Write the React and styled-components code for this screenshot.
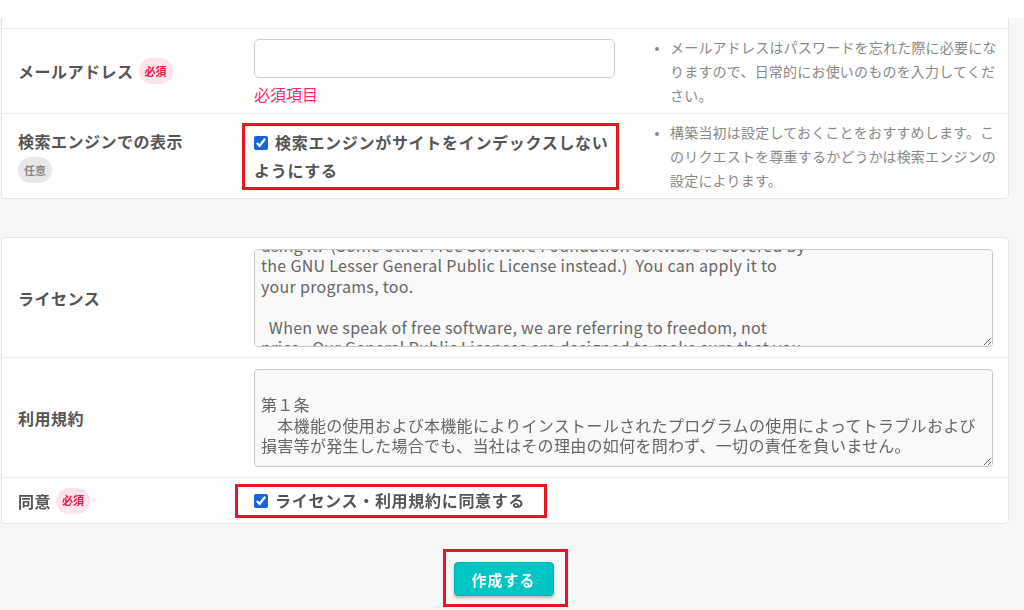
import React, { useEffect, useRef } from "react";
import styled, { createGlobalStyle } from "styled-components";

const GlobalStyle = createGlobalStyle`
  html, body {
    margin: 0;
    padding: 0;
    background: #f7f7f7;
  }
  body {
    font-family: "Noto Sans CJK JP", "Noto Sans", sans-serif;
    color: #555;
  }
`;

const LICENSE = `                    GNU GENERAL PUBLIC LICENSE
                       Version 2, June 1991

 Copyright (C) 1989, 1991 Free Software Foundation, Inc.,
 51 Franklin Street, Fifth Floor, Boston, MA 02110-1301 USA
 Everyone is permitted to copy and distribute verbatim copies
 of this license document, but changing it is not allowed.

                            Preamble

  The licenses for most software are designed to take away your
freedom to share and change it.  By contrast, the GNU General Public
License is intended to guarantee your freedom to share and change free
software--to make sure the software is free for all its users.  This
General Public License applies to most of the Free Software
Foundation's software and to any other program whose authors commit to
using it.  (Some other Free Software Foundation software is covered by
the GNU Lesser General Public License instead.)  You can apply it to
your programs, too.

  When we speak of free software, we are referring to freedom, not
price.  Our General Public Licenses are designed to make sure that you
have the freedom to distribute copies of free software (and charge for
this service if you wish), that you receive source code or want it, that
you can change the software or use pieces of it if you want it in new
free programs; and that you know you can do these things.`;

const TERMS = `
第１条
　本機能の使用および本機能によりインストールされたプログラムの使用によってトラブルおよび損害等が発生した場合でも、当社はその理由の如何を問わず、一切の責任を負いません。`;

// Layout

const TopStrip = styled.div`
  height: 18px;
  background: #fff;
`;

const Page = styled.div`
  width: 1008px;
  margin-left: 1px;
`;

const Card = styled.div`
  background: #fff;
  border: 1px solid #e6e6e6;
  border-radius: 4px;
  margin-top: ${(p) => p.$gap || 0}px;
  ${(p) =>
    p.$cut &&
    `
    border-top: none;
    border-top-left-radius: 0;
    border-top-right-radius: 0;
  `}
`;

const Row = styled.div`
  display: grid;
  grid-template-columns: ${(p) => (p.$notes ? "236px 361px 1fr" : "236px 1fr")};
  align-items: center;
  min-height: ${(p) => p.$h || 0}px;
  padding: ${(p) => p.$py || 0}px ${(p) => (p.$notes ? 6 : 15)}px
    ${(p) => p.$py || 0}px 16px;
  border-bottom: 1px solid #ececec;
  box-sizing: border-box;

  &:last-child {
    border-bottom: none;
  }
`;

const Label = styled.div`
  font-size: 16px;
  font-weight: 700;
  letter-spacing: 0.5px;
  line-height: 24px;
  color: #555;
`;

const LabelLine = styled.div`
  display: flex;
  align-items: center;
`;

const Badge = styled.span`
  display: inline-flex;
  align-items: center;
  justify-content: center;
  height: 26px;
  padding: 0 6px;
  margin-left: ${(p) => (p.$block ? 0 : 5)}px;
  margin-top: ${(p) => (p.$block ? 4 : 0)}px;
  border-radius: 13px;
  font-size: 11px;
  font-weight: 700;
  letter-spacing: 0;
  line-height: 1;
  background: ${(p) => (p.$optional ? "#e8e8e8" : "#fde3ea")};
  color: ${(p) => (p.$optional ? "#888" : "#e8194b")};
`;

const Field = styled.div`
  display: flex;
  flex-direction: column;
  padding-top: 2px;
`;

const TextInput = styled.input`
  box-sizing: border-box;
  width: 361px;
  height: 39px;
  border: 1px solid #cfcfcf;
  border-radius: 5px;
  background: #fff;
  margin: 0 0 4px;
`;

const ErrorText = styled.div`
  font-size: 16px;
  line-height: 24px;
  color: #f0306a;
`;

const Notes = styled.ul`
  margin: 0 0 0 40px;
  padding: 0 0 0 15px;
  font-size: 14px;
  letter-spacing: 0.2px;
  line-height: 24px;
  color: #888;

  li::marker {
    font-size: 11px;
    color: #888;
  }
`;

const Highlight = styled.div`
  display: ${(p) => (p.$inline ? "inline-block" : "block")};
  border: 3px solid #e8141f;
  margin: ${(p) => p.$m};
  padding: ${(p) => p.$p};
`;

const CheckLabel = styled.label`
  display: block;
  font-size: 16px;
  font-weight: 700;
  letter-spacing: 0.7px;
  line-height: ${(p) => p.$lh || 28}px;
  color: #555;
`;

const Check = styled.input`
  width: 14px;
  height: 14px;
  margin: 0 7px 0 0;
  vertical-align: -1px;
  accent-color: #1565d8;
`;

const Area = styled.textarea`
  display: block;
  box-sizing: border-box;
  width: 100%;
  height: 98px;
  padding: 4px 6px;
  border: 1px solid #c9c9c9;
  border-radius: 4px;
  background: #f9f9f9;
  color: #666;
  font-family: inherit;
  font-size: 16px;
  letter-spacing: 0.3px;
  line-height: 20.5px;
  white-space: pre-wrap;
  scrollbar-width: none;
  resize: vertical;
  outline: none;
`;

const Actions = styled.div`
  display: flex;
  justify-content: center;
  padding-top: 25px;
`;

const SubmitButton = styled.button`
  display: block;
  width: 100px;
  height: 34px;
  border: 1px solid #00b3b3;
  border-radius: 4px;
  background: #00c5c5;
  color: #fff;
  font-family: inherit;
  font-size: 15px;
  font-weight: 700;
  letter-spacing: 1px;
  box-shadow: 0 2px 3px rgba(0, 0, 0, 0.25);
  cursor: pointer;
`;

export default function App() {
  const licenseRef = useRef(null);

  useEffect(() => {
    if (licenseRef.current) licenseRef.current.scrollTop = 347;
  }, []);

  return (
    <>
      <GlobalStyle />
      <TopStrip />
      <Page>
        <Card $cut>
          <Row $h={11} />
          <Row $notes $py={6}>
            <LabelLine>
              <Label>メールアドレス</Label>
              <Badge>必須</Badge>
            </LabelLine>
            <Field>
              <TextInput type="text" />
              <ErrorText>必須項目</ErrorText>
            </Field>
            <Notes>
              <li>
                メールアドレスはパスワードを忘れた際に必要になりますので、日常的にお使いのものを入力してください。
              </li>
            </Notes>
          </Row>
          <Row $notes $py={6}>
            <div>
              <Label>検索エンジンでの表示</Label>
              <Badge $optional $block>
                任意
              </Badge>
            </div>
            <Highlight $m="0 -4px 0 -12px" $p="2px 4px 3px 9px">
              <CheckLabel>
                <Check type="checkbox" defaultChecked />
                検索エンジンがサイトをインデックスしないようにする
              </CheckLabel>
            </Highlight>
            <Notes>
              <li>
                構築当初は設定しておくことをおすすめします。このリクエストを尊重するかどうかは検索エンジンの設定によります。
              </li>
            </Notes>
          </Row>
        </Card>

        <Card $gap={38}>
          <Row $h={120} $py={10}>
            <Label>ライセンス</Label>
            <Area ref={licenseRef} readOnly defaultValue={LICENSE} />
          </Row>
          <Row $h={120} $py={10}>
            <Label>利用規約</Label>
            <Area readOnly defaultValue={TERMS} />
          </Row>
          <Row $h={45} $py={5}>
            <LabelLine>
              <Label>同意</Label>
              <Badge>必須</Badge>
            </LabelLine>
            <div>
              <Highlight $inline $m="0 0 0 -19px" $p="1px 19px 2px 16px">
                <CheckLabel $lh={25}>
                  <Check type="checkbox" defaultChecked />
                  ライセンス・利用規約に同意する
                </CheckLabel>
              </Highlight>
            </div>
          </Row>
        </Card>

        <Actions>
          <Highlight $inline $m="0" $p="10px 11px 8px 8px">
            <SubmitButton type="button">作成する</SubmitButton>
          </Highlight>
        </Actions>
      </Page>
    </>
  );
}
